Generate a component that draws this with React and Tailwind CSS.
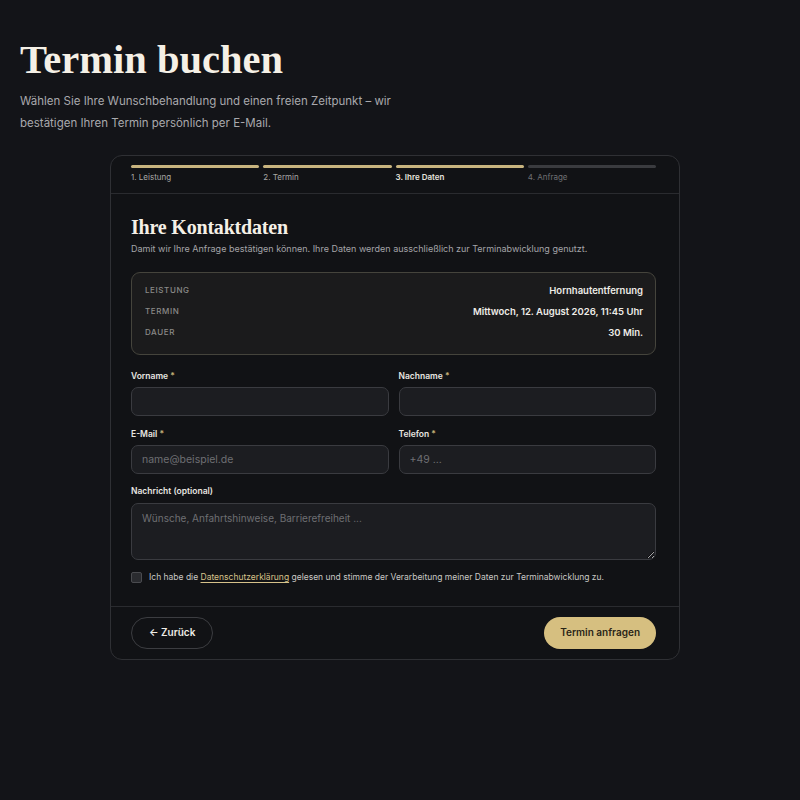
import React from "react";

const steps = [
  { label: "1. Leistung", done: true },
  { label: "2. Termin", done: true },
  { label: "3. Ihre Daten", done: true, active: true },
  { label: "4. Anfrage", done: false },
];

function Field({ label, placeholder }) {
  return (
    <div className="flex flex-col">
      <label className="text-[8.5px] font-semibold text-[#e8e6e1] h-[12px] leading-[12px] mb-[5px]">
        {label} <span className="text-[#c9b27a]">*</span>
      </label>
      <input
        placeholder={placeholder}
        className="h-[29px] rounded-[7px] border border-[#3a3b40] bg-[#1c1d21] px-[10px] text-[10.5px] text-[#ddd] placeholder:text-[#6e6f73] outline-none"
      />
    </div>
  );
}

export default function App() {
  return (
    <div
      className="min-h-[800px] w-full bg-[#131418] text-white"
      style={{ fontFamily: "Inter, 'Noto Sans', sans-serif" }}
    >
      <div className="pl-[20px] pt-[38px]">
        <h1
          className="text-[40.5px] leading-[44px] font-bold text-[#f5f0e6] tracking-[0px]"
          style={{ fontFamily: "'Liberation Serif', 'DejaVu Serif', serif" }}
        >
          Termin buchen
        </h1>
        <p className="mt-[8px] text-[11.5px] leading-[22px] text-[#a9a9ad]">
          Wählen Sie Ihre Wunschbehandlung und einen freien Zeitpunkt – wir
          <br />
          bestätigen Ihren Termin persönlich per E-Mail.
        </p>
      </div>

      <div className="ml-[110px] mt-[21px] w-[570px] rounded-[12px] border border-[#2f3034] bg-[#111215]">
        <div className="pl-[20px] pr-[23px] pt-[9px] pb-[10px] border-b border-[#2a2b2f] grid grid-cols-4 gap-[4px]">
          {steps.map((s) => (
            <div key={s.label} className="flex flex-col">
              <div className={`h-[3px] rounded-full ${s.done ? "bg-[#c8b47f]" : "bg-[#3a3b3f]"}`} />
              <span
                className={`mt-[3px] text-[8px] leading-[12px] ${
                  s.active ? "text-[#e6e4df] font-semibold" : s.done ? "text-[#a9a8a5]" : "text-[#6f7074]"
                }`}
              >
                {s.label}
              </span>
            </div>
          ))}
        </div>

        <div className="pl-[20px] pr-[23px] pt-[21px] pb-[22px] border-b border-[#2a2b2f]">
          <h2
            className="text-[20px] leading-[24px] font-bold text-[#f5f0e6] tracking-[-0.2px]"
            style={{ fontFamily: "'Liberation Serif', 'DejaVu Serif', serif" }}
          >
            Ihre Kontaktdaten
          </h2>
          <p className="mt-[4px] text-[9px] leading-[12px] text-[#a4a4a8]">
            Damit wir Ihre Anfrage bestätigen können. Ihre Daten werden ausschließlich zur Terminabwicklung genutzt.
          </p>

          <div className="mt-[17px] rounded-[9px] border border-[#45443c] bg-[#1b1b1c] pl-[13px] pr-[12px] pt-[12px] pb-[15px] flex flex-col gap-[9px]">
            {[
              ["LEISTUNG", "Hornhautentfernung"],
              ["TERMIN", "Mittwoch, 12. August 2026, 11:45 Uhr"],
              ["DAUER", "30 Min."],
            ].map(([k, v]) => (
              <div key={k} className="flex justify-between items-center h-[12px]">
                <span className="text-[8px] tracking-[0.6px] text-[#8a8a88] font-medium -mt-[3px]">{k}</span>
                <span className="text-[9.5px] font-semibold text-[#eeece7]">{v}</span>
              </div>
            ))}
          </div>

          <div className="mt-[15px] grid grid-cols-2 gap-x-[10px] gap-y-[12px]">
            <Field label="Vorname" placeholder="" />
            <Field label="Nachname" placeholder="" />
            <Field label="E-Mail" placeholder="name@beispiel.de" />
            <Field label="Telefon" placeholder="+49 ..." />
          </div>

          <div className="mt-[11px] flex flex-col">
            <label className="text-[8.5px] font-semibold text-[#e8e6e1] h-[12px] leading-[12px] mb-[6px]">
              Nachricht (optional)
            </label>
            <textarea
              placeholder="Wünsche, Anfahrtshinweise, Barrierefreiheit ..."
              className="h-[57px] rounded-[7px] border border-[#3a3b40] bg-[#1c1d21] px-[10px] pt-[7px] text-[10px] text-[#ddd] placeholder:text-[#6e6f73] outline-none resize-y"
            />
          </div>

          <div className="mt-[11px] flex items-center gap-[7px]">
            <span className="w-[11px] h-[11px] rounded-[2px] border border-[#4a4b4f] bg-[#2a2b2f]" />
            <span className="text-[8.5px] text-[#c9c8c4]">
              Ich habe die{" "}
              <span className="text-[#d7c28a] underline underline-offset-2">Datenschutzerklärung</span> gelesen und
              stimme der Verarbeitung meiner Daten zur Terminabwicklung zu.
            </span>
          </div>
        </div>

        <div className="pl-[20px] pr-[23px] py-[10px] flex justify-between items-center">
          <button className="h-[32px] px-[17px] rounded-full border border-[#3c3d41] text-[10px] font-semibold text-[#eeece7] bg-transparent">
            ← Zurück
          </button>
          <button className="h-[32px] px-[16px] rounded-full bg-[#d6bf80] text-[10px] font-semibold text-[#2a2517]">
            Termin anfragen
          </button>
        </div>
      </div>
    </div>
  );
}
